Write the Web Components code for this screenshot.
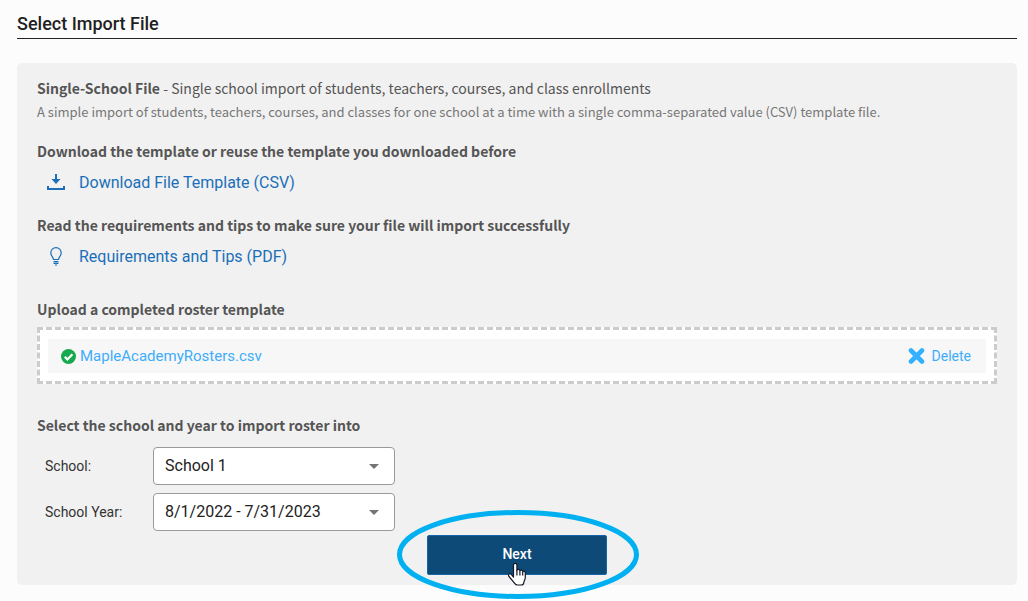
<!DOCTYPE html>
<html lang="en">
<head>
<meta charset="utf-8">
<meta name="viewport" content="width=device-width, initial-scale=1">
<title>Select Import File</title>
<style>
    body {
        margin: 0;
        background-color: #fcfcfc;
        font-family: Roboto, sans-serif;
        --source: "Noto Sans CJK SC", "Open Sans", sans-serif;
        --blue: #1a6fb8;
        --sky: #3dadfc;
    }
</style>
</head>
<body>
<import-page heading="Select Import File">
    <import-intro name="Single-School File">
        Single school import of students, teachers, courses, and class enrollments
        <span slot="detail">A simple import of students, teachers, courses, and classes for one school at a time with a single comma-separated value (CSV) template file.</span>
    </import-intro>
    <import-step heading="Download the template or reuse the template you downloaded before">
        <icon-link icon="download">Download File Template (CSV)</icon-link>
    </import-step>
    <import-step heading="Read the requirements and tips to make sure your file will import successfully">
        <icon-link icon="bulb">Requirements and Tips (PDF)</icon-link>
    </import-step>
    <import-step class="upload" heading="Upload a completed roster template">
        <file-drop>MapleAcademyRosters.csv</file-drop>
    </import-step>
    <import-step class="target" heading="Select the school and year to import roster into">
        <select-field label="School:" options="School 1|School 2"></select-field>
        <select-field label="School Year:" options="8/1/2022 - 7/31/2023|8/1/2023 - 7/31/2024"></select-field>
    </import-step>
    <next-button>Next</next-button>
</import-page>

<script>
class ImportPage extends HTMLElement {
    constructor() {
        super();
        this.attachShadow({ mode: 'open' });
        this.shadowRoot.innerHTML = `
            <style>
                :host {
                    display: block;
                    padding: 11px 11px 16px 17px;
                }
                h1 {
                    margin: 0 0 24px;
                    padding-bottom: 1px;
                    border-bottom: 1px solid #222;
                    color: #1f1f1f;
                    font-size: 18px;
                    font-weight: 500;
                    line-height: 26px;
                }
                main {
                    display: flex;
                    flex-direction: column;
                    padding: 13px 20px 10px;
                    background-color: #f1f1f1;
                    border-radius: 5px;
                }
                ::slotted(import-step) {
                    margin-bottom: 18px;
                }
                ::slotted(.upload) {
                    margin: 10px 0 29px;
                }
                ::slotted(.target) {
                    margin-bottom: 4px;
                }
            </style>
            <h1>${this.getAttribute('heading')}</h1>
            <main><slot></slot></main>
        `;
    }
}
customElements.define('import-page', ImportPage);

class ImportIntro extends HTMLElement {
    constructor() {
        super();
        this.attachShadow({ mode: 'open' });
        this.shadowRoot.innerHTML = `
            <style>
                :host {
                    display: block;
                    margin-bottom: 15px;
                    font-family: var(--source);
                }
                p {
                    margin: 0;
                    color: #555;
                    font-size: 14px;
                    line-height: 24px;
                }
                .detail {
                    color: #777;
                    font-size: 13px;
                }
            </style>
            <p><strong>${this.getAttribute('name')}</strong> - <slot></slot></p>
            <p class="detail"><slot name="detail"></slot></p>
        `;
    }
}
customElements.define('import-intro', ImportIntro);

class ImportStep extends HTMLElement {
    constructor() {
        super();
        this.attachShadow({ mode: 'open' });
        this.shadowRoot.innerHTML = `
            <style>
                :host {
                    display: block;
                }
                h2 {
                    margin: 0;
                    color: #555;
                    font-family: var(--source);
                    font-size: 14px;
                    font-weight: 700;
                    line-height: 24px;
                }
                ::slotted(icon-link) {
                    margin-top: 8px;
                }
                ::slotted(file-drop) {
                    margin-top: 6px;
                }
                ::slotted(select-field) {
                    margin-top: 8px;
                }
                ::slotted(select-field:first-child) {
                    margin-top: 10px;
                }
            </style>
            <h2>${this.getAttribute('heading')}</h2>
            <slot></slot>
        `;
    }
}
customElements.define('import-step', ImportStep);

const icons = {
    download: `
        <path d="M1 13v3h16v-3" fill="none" stroke="currentColor" stroke-width="2"/>
        <path d="M8 1h2v5h3.500L9 11 4.500 6H8z" fill="currentColor"/>`,
    bulb: `
        <path d="M6.500 12.500C6.500 10 3.800 9.500 3.800 5.800a5.200 5.200 0 0 1 10.400 0c0 3.700-2.700 4.200-2.700 6.700z" fill="none" stroke="currentColor" stroke-width="1.200"/>
        <path d="M6.500 14.600h5M6.500 16.400h5M8 18h2" stroke="currentColor" stroke-width="1.200"/>`
};

class IconLink extends HTMLElement {
    constructor() {
        super();
        this.attachShadow({ mode: 'open' });
        this.shadowRoot.innerHTML = `
            <style>
                :host {
                    display: block;
                }
                a {
                    display: inline-flex;
                    align-items: center;
                    gap: 14px;
                    padding-left: 10px;
                    color: var(--blue);
                    font-size: 16px;
                    line-height: 24px;
                    text-decoration: none;
                    vertical-align: top;
                }
            </style>
            <a href="#">
                <svg width="18" height="20" viewBox="0 0 18 20" aria-hidden="true">${icons[this.getAttribute('icon')]}</svg>
                <slot></slot>
            </a>
        `;
    }
}
customElements.define('icon-link', IconLink);

class FileDrop extends HTMLElement {
    constructor() {
        super();
        this.attachShadow({ mode: 'open' });
        this.shadowRoot.innerHTML = `
            <style>
                :host {
                    display: block;
                    padding: 9px 8px 8px;
                    border: 3px dashed #ccc;
                    background-color: #fff;
                }
                .file {
                    display: flex;
                    justify-content: space-between;
                    align-items: center;
                    padding: 0 15px 0 13px;
                    background-color: #f7f7f7;
                    line-height: 34px;
                }
                a, button {
                    display: flex;
                    align-items: center;
                    color: var(--sky);
                }
                a {
                    gap: 4px;
                    font-size: 15px;
                    text-decoration: none;
                }
                button {
                    gap: 7px;
                    padding: 0;
                    border: none;
                    background: none;
                    font: inherit;
                    font-size: 14px;
                    cursor: pointer;
                }
            </style>
            <div class="file">
                <a href="#">
                    <svg width="15" height="15" viewBox="0 0 15 15" aria-hidden="true">
                        <circle cx="7.500" cy="7.500" r="7.500" fill="#16a94d"/>
                        <path d="M3.800 7.800l2.600 2.600 5-5.200" fill="none" stroke="#fff" stroke-width="2.200"/>
                    </svg>
                    <slot></slot>
                </a>
                <button type="button">
                    <svg width="17" height="17" viewBox="0 0 17 17" aria-hidden="true">
                        <path d="M3 2.500l11 11M14 2.500l-11 11" stroke="#33b0ff" stroke-width="4.600" stroke-linecap="round"/>
                    </svg>
                    Delete
                </button>
            </div>
        `;
    }
}
customElements.define('file-drop', FileDrop);

class SelectField extends HTMLElement {
    constructor() {
        super();
        const options = this.getAttribute('options').split('|');
        this.attachShadow({ mode: 'open' });
        this.shadowRoot.innerHTML = `
            <style>
                :host {
                    display: flex;
                    align-items: center;
                    padding-left: 8px;
                }
                label {
                    width: 108px;
                    color: #333;
                    font-size: 14px;
                }
                .box {
                    display: grid;
                    align-items: center;
                    width: 242px;
                }
                select, svg {
                    grid-area: 1 / 1;
                }
                select {
                    appearance: none;
                    box-sizing: border-box;
                    width: 100%;
                    height: 38px;
                    padding: 0 30px 2px 11px;
                    border: 1px solid #999;
                    border-radius: 4px;
                    background-color: #fff;
                    color: #222;
                    font: inherit;
                    font-size: 16px;
                }
                svg {
                    justify-self: end;
                    margin-right: 16px;
                    pointer-events: none;
                }
            </style>
            <label for="field">${this.getAttribute('label')}</label>
            <div class="box">
                <select id="field">${options.map(o => `<option>${o}</option>`).join('')}</select>
                <svg width="10" height="5" viewBox="0 0 10 5" aria-hidden="true"><path d="M0 0h10L5 5z" fill="#757575"/></svg>
            </div>
        `;
    }
}
customElements.define('select-field', SelectField);

class NextButton extends HTMLElement {
    constructor() {
        super();
        this.attachShadow({ mode: 'open' });
        this.shadowRoot.innerHTML = `
            <style>
                :host {
                    display: block;
                    position: relative;
                    align-self: center;
                }
                button {
                    display: block;
                    width: 180px;
                    height: 40px;
                    padding: 0 0 2px;
                    border: 1px solid #1565a8;
                    border-radius: 2px;
                    background-color: #0d4a77;
                    color: #fff;
                    font: inherit;
                    font-size: 14px;
                    font-weight: 500;
                    cursor: pointer;
                }
                svg {
                    position: absolute;
                    pointer-events: none;
                }
                .ring {
                    top: -25px;
                    left: -30px;
                }
                .hand {
                    top: 27px;
                    left: 80px;
                }
            </style>
            <button type="button"><slot></slot></button>
            <svg class="ring" width="242" height="89" viewBox="0 0 242 89" aria-hidden="true">
                <ellipse cx="121" cy="44.500" rx="118.500" ry="42" fill="none" stroke="#00b0f0" stroke-width="5"/>
            </svg>
            <svg class="hand" width="20" height="24" viewBox="0 0 20 24" aria-hidden="true">
                <path d="M6.500 15V3a1.700 1.700 0 0 1 3.400 0v5.200c.6-1.200 2.800-1 3 .5.700-1 2.600-.7 2.800.8.900-.8 2.600-.2 2.600 1.400v4.600c0 2-1.300 3.300-1.500 5.200-.2 1.600-1.300 2.300-2.800 2.300h-3.500c-1.500 0-2.200-.7-3-1.900L2 14.500c-1.300-2 .7-3.600 2.300-2.200z" fill="#fff" stroke="#111827" stroke-width="1.200" stroke-linejoin="round"/>
                <path d="M9.900 8v5.500M12.900 9v4.500M15.700 10v3.500" stroke="#111827" stroke-width="1.200"/>
            </svg>
        `;
    }
}
customElements.define('next-button', NextButton);
</script>
</body>
</html>
